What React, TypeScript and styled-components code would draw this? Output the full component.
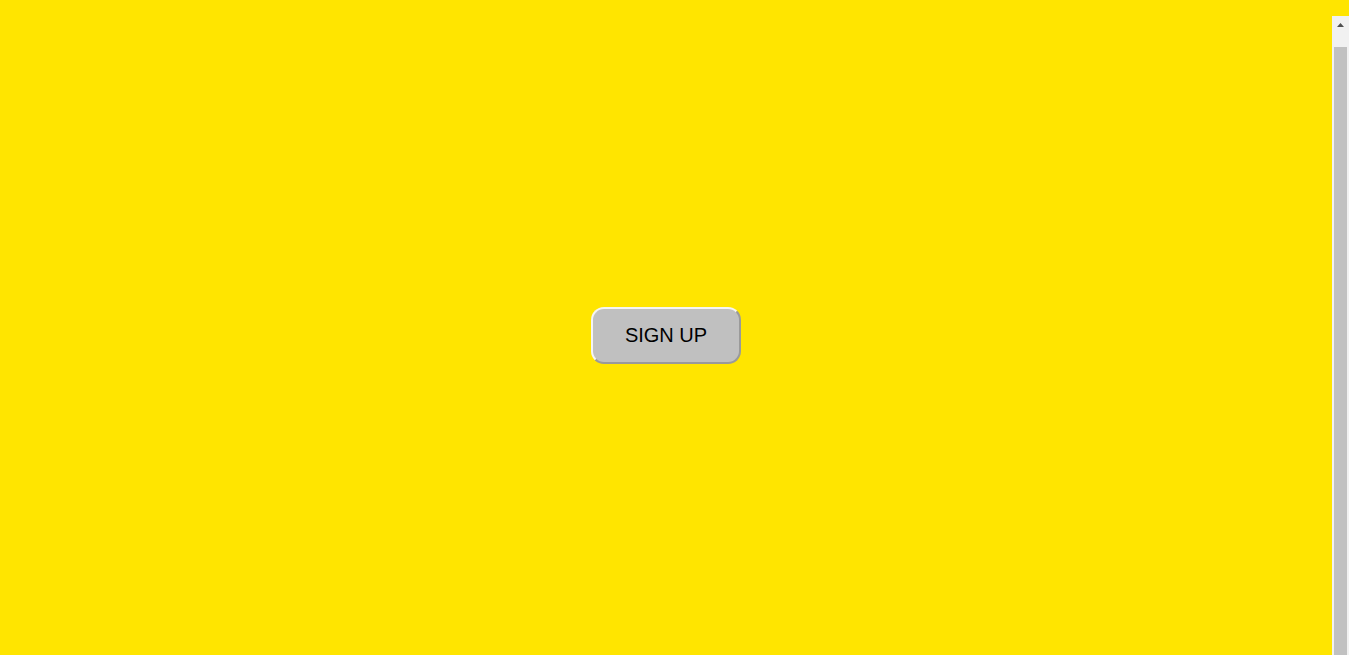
import React from "react";
import styled, { createGlobalStyle } from "styled-components";

const Global = createGlobalStyle`
  html, body {
    margin: 0;
    padding: 0;
    background: #ffe500;
    overflow: hidden;
    height: 100%;
  }
  #root { height: 100%; }
`;

const Page = styled.div`
  height: 100%;
  padding-top: 16px;
  box-sizing: border-box;
  background: #ffe500;
  display: flex;
`;

const Main = styled.main`
  flex: 1;
  display: flex;
  align-items: center;
  justify-content: center;
`;

const ScrollTrack = styled.div`
  width: 17px;
  background: #f1f1f1;
  display: flex;
  flex-direction: column;
  align-items: center;
`;

const ArrowButton = styled.div`
  height: 17px;
  width: 17px;
  display: flex;
  align-items: center;
  justify-content: center;
`;

const Thumb = styled.div`
  margin-top: 14px;
  width: 13px;
  flex: 1;
  background: #c1c1c1;
`;

const SignUpButton = styled.button`
  width: 150px;
  height: 57px;
  background: #c0c0c0;
  border: 2px solid;
  border-color: #f4f4f4 #9a9a9a #9a9a9a #f4f4f4;
  border-radius: 13px;
  font-family: "Liberation Sans", Arial, sans-serif;
  font-size: 20px;
  color: #000;
  cursor: pointer;
  padding: 0;
`;

export default function App() {
  return (
    <>
      <Global />
      <Page>
        <Main>
          <SignUpButton>SIGN UP</SignUpButton>
        </Main>
        <ScrollTrack>
          <ArrowButton>
            <svg width="7" height="4" viewBox="0 0 7 4">
              <polygon points="0,4 3.5,0 7,4" fill="#505050" />
            </svg>
          </ArrowButton>
          <Thumb />
        </ScrollTrack>
      </Page>
    </>
  );
}
